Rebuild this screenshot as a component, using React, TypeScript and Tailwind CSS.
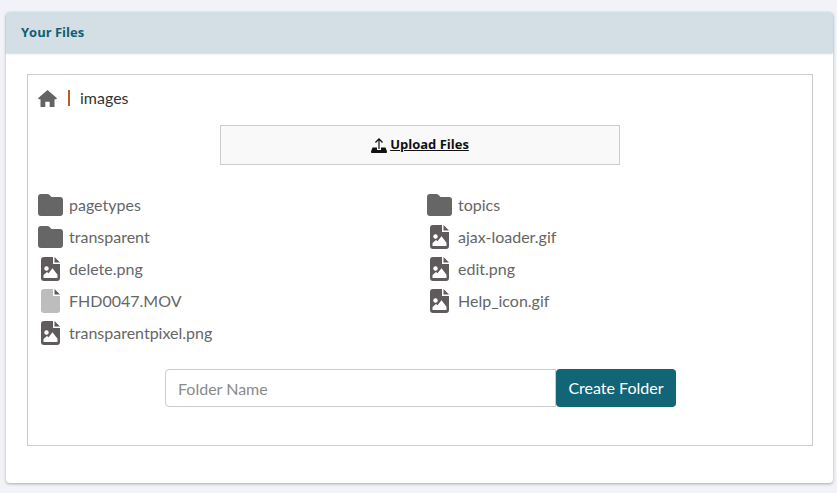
const leftFiles = [
  { name: 'pagetypes', kind: 'folder' },
  { name: 'transparent', kind: 'folder' },
  { name: 'delete.png', kind: 'image' },
  { name: 'FHD0047.MOV', kind: 'file' },
  { name: 'transparentpixel.png', kind: 'image' },
];

const rightFiles = [
  { name: 'topics', kind: 'folder' },
  { name: 'ajax-loader.gif', kind: 'image' },
  { name: 'edit.png', kind: 'image' },
  { name: 'Help_icon.gif', kind: 'image' },
];

const FolderIcon = () => (
  <svg viewBox="0 0 25 22" className="h-[22px] w-[25px] fill-[#666666]">
    <path d="M3 0h6.500a2.500 2.500 0 0 1 1.800.8L13.500 3H22a3 3 0 0 1 3 3v13a3 3 0 0 1-3 3H3a3 3 0 0 1-3-3V3a3 3 0 0 1 3-3z" />
  </svg>
);

const ImageIcon = () => (
  <svg viewBox="0 0 19 24" className="ml-[3px] h-[24px] w-[19px]">
    <path fill="#5f5a5c" d="M3 0h9v7h7v14a3 3 0 0 1-3 3H3a3 3 0 0 1-3-3V3a3 3 0 0 1 3-3z" />
    <path fill="#5f5a5c" d="M13.500 0L19 5.500h-5.500z" />
    <circle cx="5.500" cy="11.500" r="2.200" fill="#ffffff" />
    <path fill="#ffffff" d="M2.500 21v-3l3.500-3 1.500 1.200 4-5 5 6.500V21z" />
  </svg>
);

const PlainFileIcon = () => (
  <svg viewBox="0 0 19 24" className="ml-[3px] h-[24px] w-[19px]">
    <path fill="#bdbdbd" d="M3 0h9v7h7v14a3 3 0 0 1-3 3H3a3 3 0 0 1-3-3V3a3 3 0 0 1 3-3z" />
    <path fill="#5f5a5c" d="M13.500 0L19 5.500h-5.500z" />
  </svg>
);

const HomeIcon = () => (
  <svg viewBox="0 0 19 17" className="h-[17px] w-[19px] fill-[#636363]">
    <path d="M9.500 0L19 8.300l-.8 1H16.500V17h-4.800v-5.200H7.300V17H2.500V9.300H.8l-.8-1z" />
  </svg>
);

const UploadIcon = () => (
  <svg viewBox="0 0 16 15" className="mr-[3px] h-[15px] w-[16px] fill-[#111111]">
    <path d="M8 0l4 4-.9.9-2.500-2.400V11H7.400V2.500L4.900 4.900 4 4z" />
    <path d="M1.500 9.500H6V12h4V9.500h4.500L16 13.500a1.200 1.200 0 0 1-1.200 1.500H1.200A1.200 1.200 0 0 1 0 13.500z" />
  </svg>
);

const FileRow = ({ name, kind }: { name: string; kind: string }) => {
  return (
    <div className="flex h-8 items-center text-[#666666]">
      <div className="flex w-[31px] shrink-0 justify-start">
        {kind === 'folder' && <FolderIcon />}
        {kind === 'image' && <ImageIcon />}
        {kind === 'file' && <PlainFileIcon />}
      </div>
      <span>{name}</span>
    </div>
  );
};

const App = () => {
  return (
    <div className="h-[493px] w-[837px] overflow-hidden bg-[#f1f3f8] pt-3 pl-[6px] font-['Lato','Noto_Sans',sans-serif] text-base">
      <div className="h-[471px] w-[827px] rounded-[4px] bg-white shadow-[0_1px_3px_rgba(0,0,0,0.3)]">
        <div className="flex h-[41px] items-center rounded-t-[4px] bg-[#d3dfe4] pl-[15px] shadow-[0_1px_2px_rgba(0,0,0,0.15)]">
          <h2 className="font-['Open_Sans',sans-serif] text-[13px] font-bold text-[#0f5f73]">Your Files</h2>
        </div>
        <div className="px-[21px] pt-[21px]">
          <div className="h-[372px] w-[786px] border border-[#cccccc] px-[10px]">
            <div className="flex h-[50px] items-center pb-[4px]">
              <HomeIcon />
              <span className="ml-[11px] h-[16px] w-[2px] bg-[#b0622a]" />
              <span className="ml-[10px] text-[#333333]">images</span>
            </div>
            <div className="ml-[182px] flex h-[40px] w-[400px] items-center justify-center border border-[#cccccc] bg-[#f9f9f9]">
              <a className="flex items-center font-['Open_Sans',sans-serif] text-[13px] font-bold text-[#111111] underline">
                <UploadIcon />
                <span>Upload Files</span>
              </a>
            </div>
            <div className="mt-[24px] grid grid-cols-[389px_1fr]">
              <div>
                {leftFiles.map((f) => (
                  <FileRow key={f.name} name={f.name} kind={f.kind} />
                ))}
              </div>
              <div>
                {rightFiles.map((f) => (
                  <FileRow key={f.name} name={f.name} kind={f.kind} />
                ))}
              </div>
            </div>
            <div className="mt-[20px] ml-[127px] flex">
              <input
                placeholder="Folder Name"
                className="h-[38px] w-[391px] rounded-l-[4px] border border-[#cccccc] px-3 text-base placeholder:text-[#8a8a8a]"
              />
              <button className="h-[38px] w-[120px] rounded-[4px] bg-[#126577] text-base text-white">
                Create Folder
              </button>
            </div>
          </div>
        </div>
      </div>
    </div>
  );
};

export default App;
